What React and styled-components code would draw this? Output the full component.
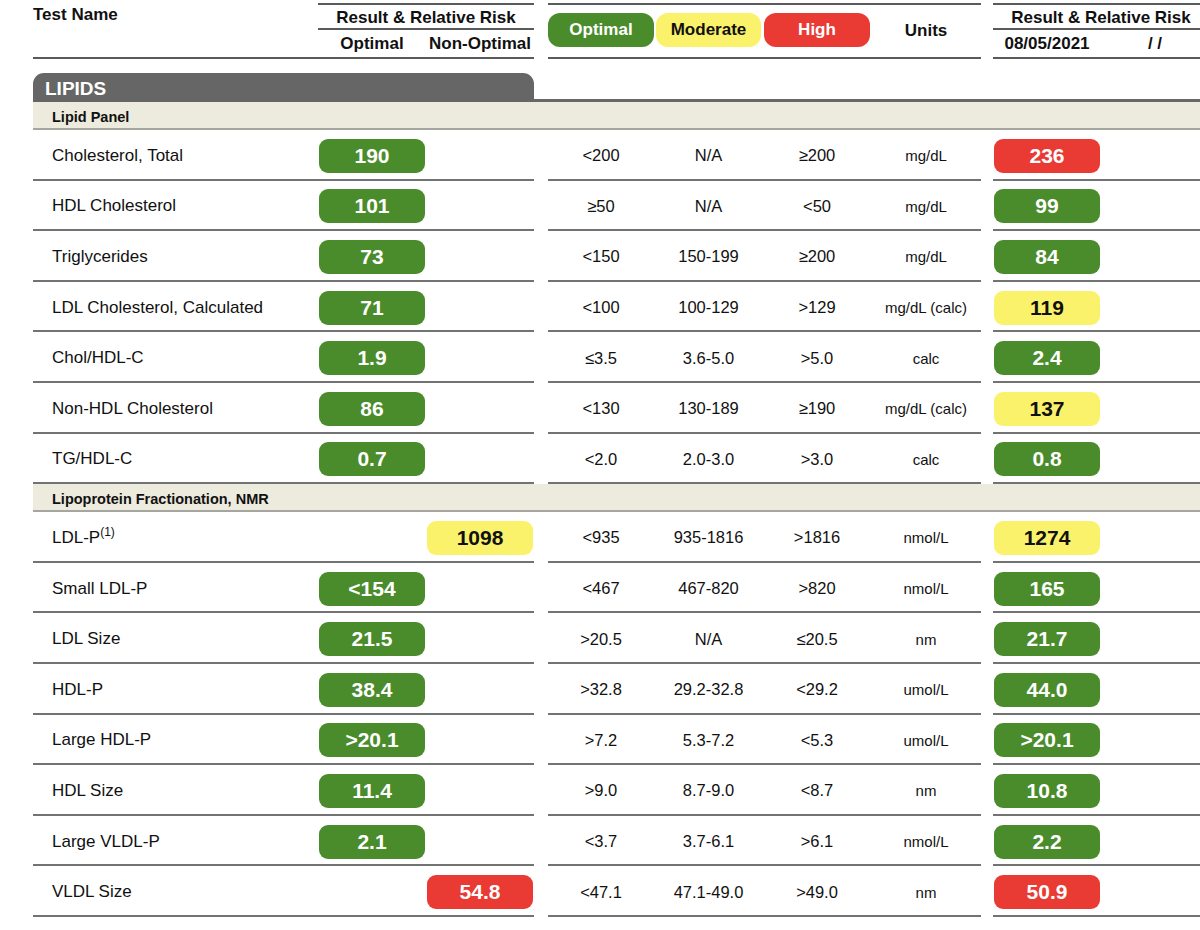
import React from 'react';
import styled, { createGlobalStyle } from 'styled-components';

const GlobalStyle = createGlobalStyle`
  body {
    margin: 0;
    background: #fff;
    color: #111;
    font-family: "Liberation Sans", Arial, sans-serif;
    overflow: hidden;
  }
`;

const TONES = {
  green: { bg: '#4a8c2c', fg: '#fff' },
  yellow: { bg: '#fbf26b', fg: '#111' },
  red: { bg: '#e93a33', fg: '#fff' },
};

const LINE = '#5a5a5a';
const ROW_LINE = '#737373';

const Page = styled.div`
  width: 1209px;
  padding-left: 33px;
  box-sizing: border-box;
`;

const HeaderRow = styled.div`
  display: flex;
  height: 59px;
`;

const TestNameHead = styled.div`
  width: 285px;
  box-sizing: border-box;
  border-bottom: 2px solid ${LINE};
  padding-top: 5px;
  font-size: 17px;
  font-weight: 700;
  line-height: 20px;
`;

const ResultGroup = styled.div`
  width: 216px;
  height: 56px;
  margin-top: 3px;
  margin-left: ${p => p.$offset || 0}px;
  box-sizing: border-box;
  border-top: 2px solid ${LINE};
  border-bottom: 2px solid ${LINE};
`;

const GroupTitle = styled.div`
  height: 25px;
  box-sizing: border-box;
  padding-top: 2px;
  border-bottom: 2px solid ${LINE};
  display: flex;
  align-items: center;
  justify-content: center;
  font-size: 17px;
  font-weight: 700;
`;

const GroupCols = styled.div`
  height: 25px;
  box-sizing: border-box;
  padding-top: 3px;
  display: grid;
  grid-template-columns: 108px 108px;
  align-items: center;
  justify-items: center;
  font-size: 17px;
  font-weight: 700;
`;

const RangeHead = styled.div`
  width: 433px;
  height: 56px;
  margin-top: 3px;
  margin-left: 14px;
  box-sizing: border-box;
  border-top: 2px solid ${LINE};
  border-bottom: 2px solid ${LINE};
  display: grid;
  grid-template-columns: 106px 109px 108px 110px;
  align-items: center;
  justify-items: center;
`;

const LegendPill = styled.div`
  width: ${p => p.$w}px;
  height: 34px;
  margin-top: -3px;
  border-radius: 12px;
  background: ${p => TONES[p.$tone].bg};
  color: ${p => TONES[p.$tone].fg};
  display: flex;
  align-items: center;
  justify-content: center;
  font-size: 17px;
  font-weight: 700;
`;

const UnitsHead = styled.div`
  font-size: 17px;
  font-weight: 700;
`;

const TabRow = styled.div`
  display: flex;
  height: 29px;
  margin-top: 14px;
`;

const Tab = styled.div`
  width: 501px;
  background: #666;
  border-radius: 11px 11px 0 0;
  color: #fff;
  font-size: 19px;
  font-weight: 700;
  padding: 3px 0 0 12px;
  box-sizing: border-box;
  display: flex;
  align-items: center;
`;

const TabRule = styled.div`
  flex: 1;
  align-self: flex-end;
  height: 3px;
  background: #686868;
`;

const Band = styled.div`
  height: 28px;
  box-sizing: border-box;
  background: #ecebdd;
  border-bottom: 2px solid #a6a6a0;
  padding: 3px 0 0 19px;
  display: flex;
  align-items: center;
  font-size: 14.5px;
  font-weight: 700;
`;

const Row = styled.div`
  display: flex;
  height: 50.6px;
`;

const Cells = styled.div`
  width: ${p => p.$width}px;
  margin-left: ${p => p.$offset || 0}px;
  box-sizing: border-box;
  padding-top: 3px;
  border-bottom: 2px solid ${ROW_LINE};
  display: grid;
  grid-template-columns: ${p => p.$cols};
  align-items: center;
  justify-items: center;
`;

const TestName = styled.div`
  justify-self: start;
  padding-left: 19px;
  font-size: 17px;
`;

const Sup = styled.sup`
  font-size: 12px;
  line-height: 0;
  vertical-align: 7px;
`;

const Range = styled.div`
  font-size: 16.5px;
`;

const Unit = styled.div`
  font-size: 15px;
`;

const Pill = styled.div`
  width: 106px;
  height: 34px;
  border-radius: 9px;
  background: ${p => TONES[p.$tone].bg};
  color: ${p => TONES[p.$tone].fg};
  display: flex;
  align-items: center;
  justify-content: center;
  font-size: 21px;
  font-weight: 700;
`;

const sections = [
  {
    title: 'Lipid Panel',
    rows: [
      ['Cholesterol, Total', 'opt', '190', '<200', 'N/A', '≥200', 'mg/dL', '236', 'red'],
      ['HDL Cholesterol', 'opt', '101', '≥50', 'N/A', '<50', 'mg/dL', '99', 'green'],
      ['Triglycerides', 'opt', '73', '<150', '150-199', '≥200', 'mg/dL', '84', 'green'],
      ['LDL Cholesterol, Calculated', 'opt', '71', '<100', '100-129', '>129', 'mg/dL (calc)', '119', 'yellow'],
      ['Chol/HDL-C', 'opt', '1.9', '≤3.5', '3.6-5.0', '>5.0', 'calc', '2.4', 'green'],
      ['Non-HDL Cholesterol', 'opt', '86', '<130', '130-189', '≥190', 'mg/dL (calc)', '137', 'yellow'],
      ['TG/HDL-C', 'opt', '0.7', '<2.0', '2.0-3.0', '>3.0', 'calc', '0.8', 'green'],
    ],
  },
  {
    title: 'Lipoprotein Fractionation, NMR',
    rows: [
      ['LDL-P', 'yellow', '1098', '<935', '935-1816', '>1816', 'nmol/L', '1274', 'yellow', '(1)'],
      ['Small LDL-P', 'opt', '<154', '<467', '467-820', '>820', 'nmol/L', '165', 'green'],
      ['LDL Size', 'opt', '21.5', '>20.5', 'N/A', '≤20.5', 'nm', '21.7', 'green'],
      ['HDL-P', 'opt', '38.4', '>32.8', '29.2-32.8', '<29.2', 'umol/L', '44.0', 'green'],
      ['Large HDL-P', 'opt', '>20.1', '>7.2', '5.3-7.2', '<5.3', 'umol/L', '>20.1', 'green'],
      ['HDL Size', 'opt', '11.4', '>9.0', '8.7-9.0', '<8.7', 'nm', '10.8', 'green'],
      ['Large VLDL-P', 'opt', '2.1', '<3.7', '3.7-6.1', '>6.1', 'nmol/L', '2.2', 'green'],
      ['VLDL Size', 'red', '54.8', '<47.1', '47.1-49.0', '>49.0', 'nm', '50.9', 'red'],
    ],
  },
];

const ResultRow = ({ row }) => {
  const [name, risk, value, optimal, moderate, high, unit, prev, prevTone, note] = row;
  const isOptimal = risk === 'opt';

  return (
    <Row>
      <Cells $width={501} $cols="285px 108px 108px">
        <TestName>
          {name}
          {note && <Sup>{note}</Sup>}
        </TestName>
        <div>{isOptimal && <Pill $tone="green">{value}</Pill>}</div>
        <div>{!isOptimal && <Pill $tone={risk}>{value}</Pill>}</div>
      </Cells>
      <Cells $width={433} $offset={14} $cols="106px 109px 108px 110px">
        <Range>{optimal}</Range>
        <Range>{moderate}</Range>
        <Range>{high}</Range>
        <Unit>{unit}</Unit>
      </Cells>
      <Cells $width={216} $offset={12} $cols="108px 108px">
        <Pill $tone={prevTone}>{prev}</Pill>
        <div />
      </Cells>
    </Row>
  );
};

const App = () => (
  <Page>
    <GlobalStyle />
    <HeaderRow>
      <TestNameHead>Test Name</TestNameHead>
      <ResultGroup>
        <GroupTitle>Result &amp; Relative Risk</GroupTitle>
        <GroupCols>
          <span>Optimal</span>
          <span>Non-Optimal</span>
        </GroupCols>
      </ResultGroup>
      <RangeHead>
        <LegendPill $tone="green" $w={106}>Optimal</LegendPill>
        <LegendPill $tone="yellow" $w={105}>Moderate</LegendPill>
        <LegendPill $tone="red" $w={106}>High</LegendPill>
        <UnitsHead>Units</UnitsHead>
      </RangeHead>
      <ResultGroup $offset={12}>
        <GroupTitle>Result &amp; Relative Risk</GroupTitle>
        <GroupCols>
          <span>08/05/2021</span>
          <span>/ /</span>
        </GroupCols>
      </ResultGroup>
    </HeaderRow>

    <TabRow>
      <Tab>LIPIDS</Tab>
      <TabRule />
    </TabRow>

    {sections.map(section => (
      <React.Fragment key={section.title}>
        <Band>{section.title}</Band>
        {section.rows.map(row => (
          <ResultRow key={row[0]} row={row} />
        ))}
      </React.Fragment>
    ))}
  </Page>
);

export default App;
